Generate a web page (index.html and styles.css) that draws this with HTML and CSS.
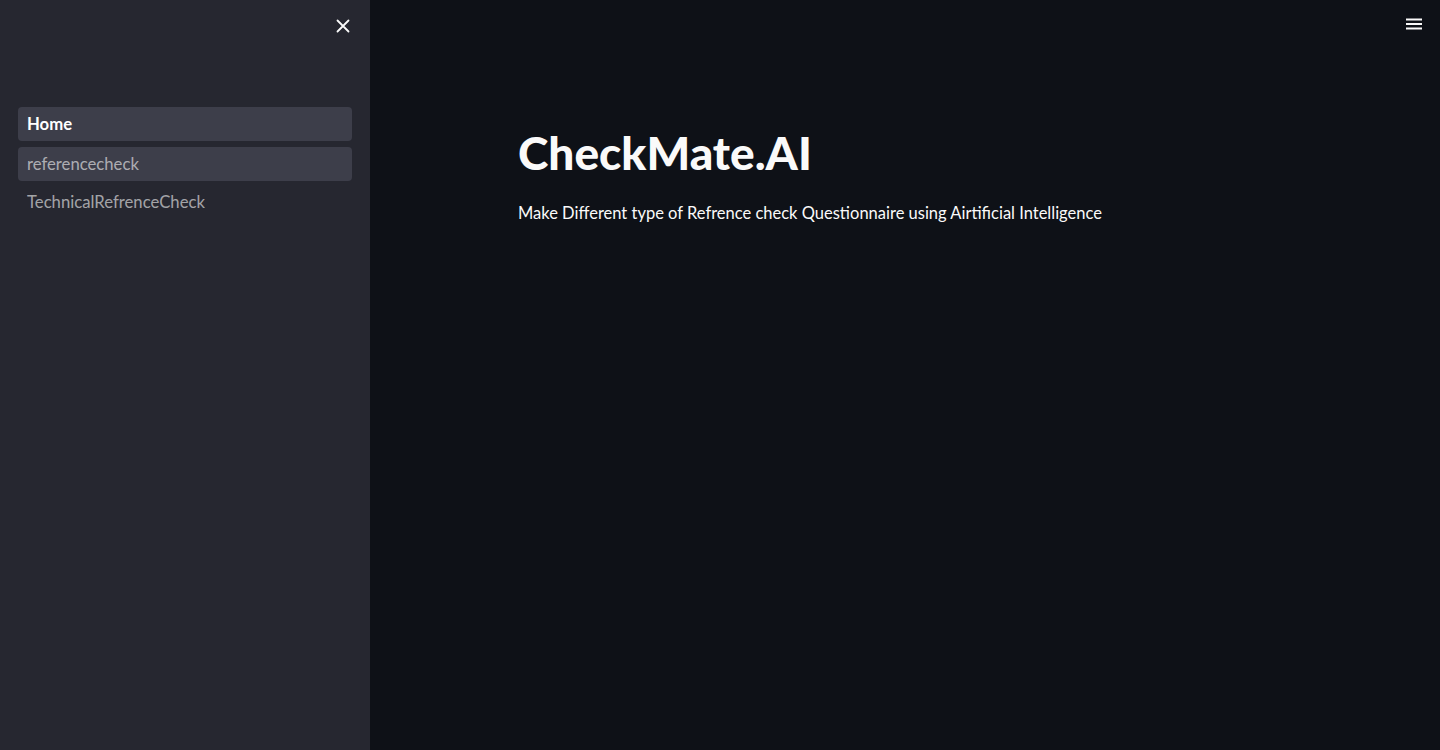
FILE: index.html
```html
<!DOCTYPE html>
<html>
<head>
<meta charset="utf-8">
<link rel="stylesheet" href="styles.css">
</head>
<body>
<div class="app">
  <aside class="sidebar">
    <div class="side-top">
      <button class="close-btn" aria-label="Close sidebar">
        <svg width="14" height="14" viewBox="0 0 14 14"><path d="M1.5 1.5 L12.5 12.5 M12.5 1.5 L1.5 12.5" stroke="#fafafa" stroke-width="1.8" stroke-linecap="round"/></svg>
      </button>
    </div>
    <nav class="nav">
      <a class="nav-item active">Home</a>
      <a class="nav-item hover">referencecheck</a>
      <a class="nav-item">TechnicalRefrenceCheck</a>
    </nav>
  </aside>
  <main class="main">
    <header class="main-top">
      <button class="menu-btn" aria-label="Menu">
        <svg width="18" height="14" viewBox="0 0 18 14"><path d="M1 2.5 H17 M1 7 H17 M1 11.5 H17" stroke="#fafafa" stroke-width="2"/></svg>
      </button>
    </header>
    <section class="content">
      <h1 class="title">CheckMate.AI</h1>
      <p class="lead">Make Different type of Refrence check Questionnaire using Airtificial Intelligence</p>
    </section>
  </main>
</div>
</body>
</html>
```

FILE: styles.css
```css
* { box-sizing: border-box; }
html, body { margin: 0; padding: 0; height: 100%; }
body {
  font-family: "Source Sans Pro", Lato, "Noto Sans", sans-serif;
  background: #0e1117;
  color: #fafafa;
}
.app {
  display: flex;
  height: 750px;
  width: 1440px;
}
.sidebar {
  width: 370px;
  flex: 0 0 370px;
  background: #262730;
  display: flex;
  flex-direction: column;
}
.side-top {
  display: flex;
  justify-content: flex-end;
  padding: 14px 12px 0 0;
  height: 107px;
}
.close-btn {
  width: 30px;
  height: 24px;
  background: none;
  border: none;
  padding: 0;
  display: flex;
  align-items: center;
  justify-content: center;
  cursor: pointer;
}
.nav {
  display: flex;
  flex-direction: column;
  gap: 6px;
  padding: 0 18px;
}
.nav-item {
  display: flex;
  align-items: center;
  height: 34px;
  padding: 0 9px;
  border-radius: 4px;
  font-size: 16.7px;
  color: rgba(250, 250, 250, 0.6);
  text-decoration: none;
}
.nav-item:last-child {
  height: 30px;
}
.nav-item.active {
  background: #3d3e4a;
  color: #ffffff;
  font-weight: 700;
}
.nav-item.hover {
  background: #3d3e4a;
}
.main {
  flex: 1;
  display: flex;
  flex-direction: column;
}
.main-top {
  display: flex;
  justify-content: flex-end;
  padding: 13px 16px 0 0;
  height: 36px;
}
.menu-btn {
  width: 20px;
  height: 22px;
  background: none;
  border: none;
  padding: 0;
  display: flex;
  align-items: center;
  justify-content: center;
}
.content {
  padding: 89px 0 0 148px;
}
.title {
  margin: 0;
  font-size: 46px;
  font-weight: 900;
  line-height: 1.2;
  color: #fafafa;
}
.lead {
  margin: 21px 0 0;
  font-size: 16.5px;
  line-height: 1.5;
  color: #fafafa;
}
```
